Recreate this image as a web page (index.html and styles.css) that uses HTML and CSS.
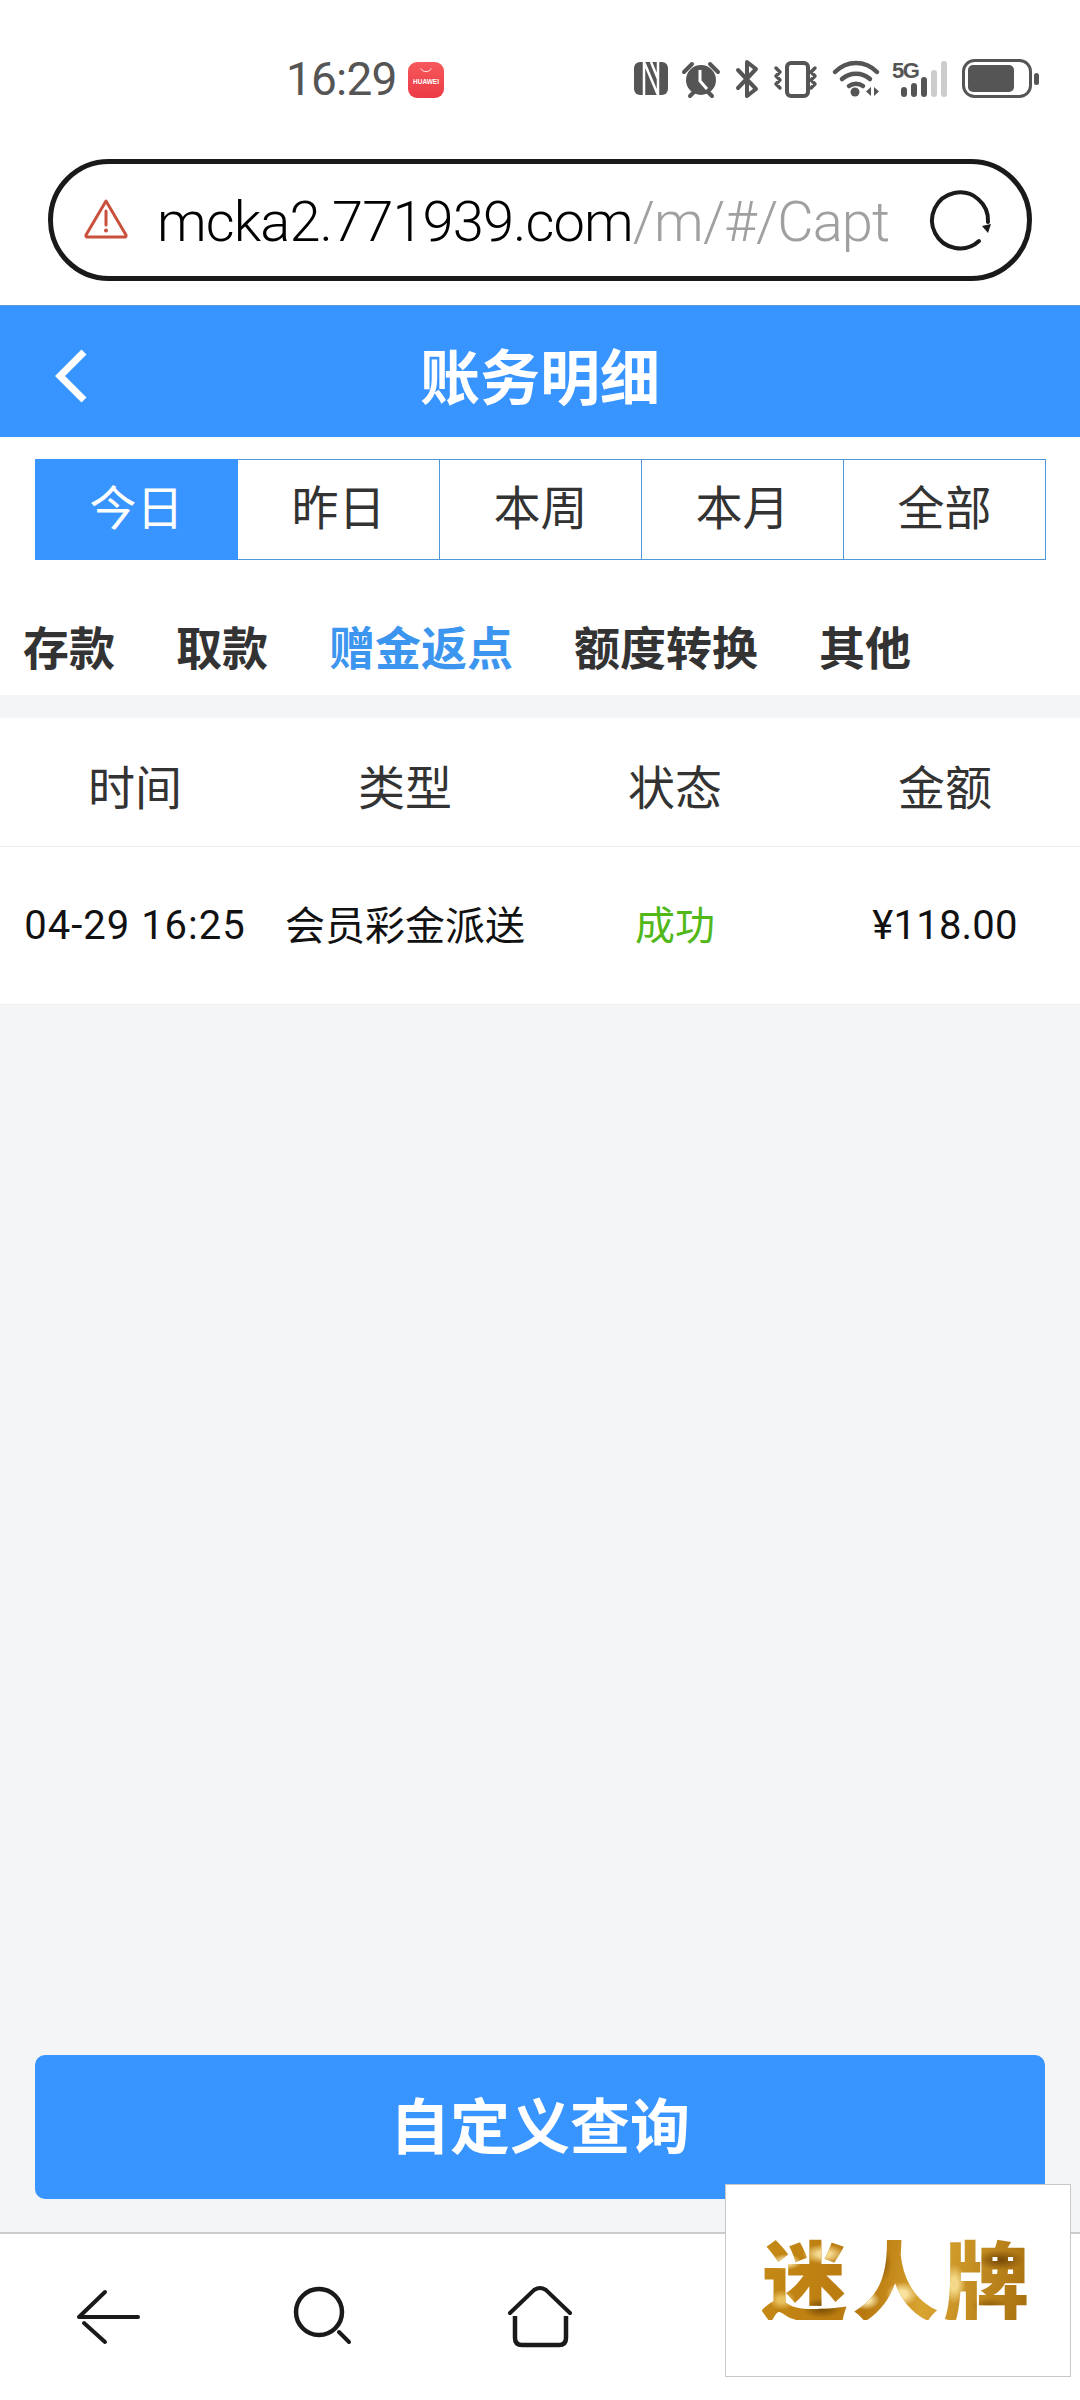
FILE: index.html
```html
<!DOCTYPE html>
<html lang="zh-CN">
<head>
<meta charset="utf-8">
<title>账务明细</title>
<link rel="stylesheet" href="styles.css">
</head>
<body>
<div class="page">
  <div class="status">
    <span class="time">16:29</span>
    <div class="app-badge">
      <svg class="app-smile" viewBox="0 0 16 8"><path d="M2 1.500C4 6.500 12 6.500 14 1.500" fill="none" stroke="#fff" stroke-width="1"/></svg>
      <span class="app-name">HUAWEI</span>
    </div>
    <svg class="status-icons" viewBox="630 56 412 46" width="412" height="46">
      <path d="M640 62h22a6 6 0 0 1 6 6v21a6 6 0 0 1-6 6h-22a6 6 0 0 1-6-6V68a6 6 0 0 1 6-6z" fill="#555"/>
      <path d="M644 62v33M644.500 63L657.500 94M651 62L658 79M658 62v33" fill="none" stroke="#fff" stroke-width="2.500"/>
      <g fill="#555" stroke="#555" stroke-linecap="round">
        <circle cx="701" cy="80" r="15" stroke="none"/>
        <path d="M684 72l8-8M718 72l-8-8M690 96l4-4M712 96l-4-4" stroke-width="4" fill="none"/>
      </g>
      <path d="M700 70v11l7 8" fill="none" stroke="#fff" stroke-width="3"/>
      <path d="M738 70l18 19-9 7V62l9 7-18 19" fill="none" stroke="#555" stroke-width="4" stroke-linejoin="round" stroke-linecap="round"/>
      <rect x="787" y="63" width="21" height="33" rx="4" fill="none" stroke="#555" stroke-width="4"/>
      <path d="M776 68l4 4-4 4 4 4-4 4 4 4M815 68l-4 4 4 4-4 4 4 4-4 4" fill="none" stroke="#555" stroke-width="3.500" stroke-linecap="round" stroke-linejoin="round"/>
      <path d="M835 72c12-12 30-12 42 0M842 79c8-7 20-7 28 0M849 86c4-3 10-3 14 0" fill="none" stroke="#555" stroke-width="4.500" stroke-linecap="round"/>
      <circle cx="855" cy="92" r="4.500" fill="#555"/>
      <path d="M871 87v9l-5-4.500zM874 87v9l5-4.500z" fill="#555"/>
      <text x="892" y="78" class="fiveg">5G</text>
      <g fill="#555">
        <rect x="901" y="87" width="6" height="10" rx="3"/>
        <rect x="911" y="83" width="6" height="14" rx="3"/>
        <rect x="921" y="77" width="6" height="20" rx="3"/>
      </g>
      <g fill="#ccc">
        <rect x="931" y="70" width="6" height="27" rx="3"/>
        <rect x="941" y="61" width="6" height="36" rx="3"/>
      </g>
      <rect x="963.500" y="60.500" width="67" height="36" rx="11" fill="none" stroke="#555" stroke-width="3"/>
      <rect x="968" y="65" width="46" height="27" rx="5" fill="#555"/>
      <rect x="1034" y="73" width="5" height="12" rx="2.500" fill="#555"/>
    </svg>
  </div>

  <div class="url-wrap">
    <div class="url-bar">
      <svg class="warn" viewBox="0 0 46 42" width="46" height="42">
        <path d="M23 3L43 37a1.500 1.500 0 0 1-1 2H4a1.500 1.500 0 0 1-1-2z" fill="none" stroke="#c9503c" stroke-width="3" stroke-linejoin="round"/>
        <path d="M23 13v14" stroke="#c9503c" stroke-width="3" stroke-linecap="round"/>
        <circle cx="23" cy="32.500" r="2" fill="#c9503c"/>
      </svg>
      <div class="url-text"><span class="url-host">mcka2.771939.com</span><span class="url-path">/m/#/Capt</span></div>
      <svg class="reload" viewBox="926 186 68 68" width="68" height="68">
        <path d="M979 241A28 28 0 1 1 988 222" fill="none" stroke="#1a1a1a" stroke-width="4" stroke-linecap="round"/>
        <path d="M982 226l6 7 3-9z" fill="#1a1a1a"/>
      </svg>
    </div>
  </div>

  <header class="title-bar">
    <svg class="back" viewBox="0 0 36 56" width="36" height="56">
      <path d="M31 4L7 28l24 24" fill="none" stroke="#fff" stroke-width="7"/>
    </svg>
    <h1 class="title">账务明细</h1>
  </header>

  <div class="periods">
    <div class="period active">今日</div>
    <div class="period">昨日</div>
    <div class="period">本周</div>
    <div class="period">本月</div>
    <div class="period">全部</div>
  </div>

  <nav class="cats">
    <span class="cat">存款</span>
    <span class="cat">取款</span>
    <span class="cat current">赠金返点</span>
    <span class="cat">额度转换</span>
    <span class="cat">其他</span>
  </nav>

  <div class="table">
    <div class="t-head">
      <span>时间</span><span>类型</span><span>状态</span><span>金额</span>
    </div>
    <div class="t-row">
      <span>04-29 16:25</span><span class="t-cjk">会员彩金派送</span><span class="t-cjk ok">成功</span><span class="t-amount">¥118.00</span>
    </div>
  </div>

  <div class="spacer"></div>
  <div class="query">自定义查询</div>

  <div class="bottom-nav">
    <svg viewBox="74 2285 68 64" width="68" height="64">
      <path d="M138 2317H79l26-25M84 2323l21 19" fill="none" stroke="#1a1a1a" stroke-width="4" stroke-linecap="round" stroke-linejoin="round"/>
    </svg>
    <svg viewBox="292 2285 64 64" width="64" height="64">
      <circle cx="319" cy="2312" r="23" fill="none" stroke="#1a1a1a" stroke-width="4.500"/>
      <path d="M339 2332l10 10" fill="none" stroke="#1a1a1a" stroke-width="4" stroke-linecap="round"/>
    </svg>
    <svg viewBox="506 2285 68 64" width="68" height="64">
      <path d="M510 2313l24-23q6-4 12 0l24 23" fill="none" stroke="#1a1a1a" stroke-width="4" stroke-linecap="round"/>
      <path d="M515 2316v22q0 7 7 7h37q7 0 7-7v-22" fill="none" stroke="#1a1a1a" stroke-width="4.500"/>
    </svg>
  </div>

  <div class="float-logo"><span class="gold">迷人牌</span></div>
</div>
</body>
</html>
```
FILE: styles.css
```css
* { box-sizing: border-box; }
html, body { margin: 0; padding: 0; background: #fff; }
body { font-family: Roboto, "Noto Sans CJK SC", sans-serif; color: #333; }
.page {
  position: relative;
  width: 1080px;
  height: 2400px;
  display: flex;
  flex-direction: column;
  background: #f4f5f7;
  overflow: hidden;
}
.status {
  height: 159px;
  background: #fff;
  display: flex;
  align-items: flex-start;
  padding: 56px 0 0 286px;
  flex: none;
}
.time {
  font-size: 46px;
  line-height: 46px;
  width: 122px;
  letter-spacing: -0.8px;
  color: #555;
}
.app-badge {
  width: 36px;
  height: 36px;
  margin-top: 6px;
  border-radius: 9px;
  background: linear-gradient(#f6595c, #ec3b46);
  display: flex;
  flex-direction: column;
  align-items: center;
}
.app-smile { width: 14px; height: 7px; margin-top: 5px; }
.app-name {
  font-family: "Liberation Sans", sans-serif;
  font-size: 6.5px;
  line-height: 8px;
  margin-top: 4px;
  color: #fff;
  font-weight: 700;
}
.status-icons { margin-left: 186px; flex: none; }
.fiveg {
  font-family: "Liberation Sans", sans-serif;
  font-size: 22px;
  font-weight: 700;
  fill: #555;
  letter-spacing: -1.5px;
}
.url-wrap {
  flex: none;
  background: #fff;
  padding: 0 48px 24px;
}
.url-bar {
  height: 122px;
  border: 5px solid #1a1a1a;
  border-radius: 61px;
  background: #fff;
  display: flex;
  align-items: center;
  padding-left: 30px;
}
.warn { flex: none; margin-top: -3px; }
.url-text {
  width: 728px;
  margin-left: 28px;
  padding-top: 3px;
  white-space: nowrap;
  font-size: 56px;
  font-weight: 300;
  line-height: 70px;
  letter-spacing: -0.9px;
  flex: none;
}
.url-host { color: #000; }
.url-path { color: #a0a0a0; }
.reload { flex: none; margin-left: 41px; }
.title-bar {
  flex: none;
  height: 132px;
  background: #3894ff;
  border-top: 1px solid #5d9bd8;
  display: flex;
  align-items: center;
  justify-content: center;
  position: relative;
  padding-top: 4px;
}
.back { position: absolute; left: 53px; top: 42px; }
.title {
  margin: 0;
  font-family: "Noto Sans CJK SC", sans-serif;
  font-size: 60px;
  font-weight: 700;
  color: #fff;
  line-height: 1;
}
.periods {
  flex: none;
  background: #fff;
  padding: 22px 34px 0 36px;
  display: grid;
  grid-template-columns: repeat(5, 1fr);
}
.period {
  height: 101px;
  display: flex;
  align-items: center;
  justify-content: center;
  font-family: "Noto Sans CJK SC", sans-serif;
  font-size: 47px;
  color: #333;
  border: solid #4f97d8;
  border-width: 1px 1px 1px 0;
  padding-bottom: 10px;
}
.period.active {
  background: #3894ff;
  color: #fff;
  border-color: #3894ff;
  box-shadow: -1px 0 0 #3894ff;
}
.cats {
  flex: none;
  height: 135px;
  background: #fff;
  display: flex;
  gap: 61px;
  align-items: center;
  padding: 35px 0 0 23px;
  font-family: "Noto Sans CJK SC", sans-serif;
  font-size: 46px;
  font-weight: 700;
  color: #333;
  line-height: 1;
}
.cat.current { color: #3c96f0; }
.table {
  flex: none;
  margin-top: 23px;
  background: #fff;
  border-bottom: 1px solid #eee;
}
.t-head, .t-row {
  display: grid;
  grid-template-columns: repeat(4, 270px);
  text-align: center;
  align-items: center;
}
.t-head {
  height: 129px;
  border-bottom: 1px solid #eee;
  font-family: "Noto Sans CJK SC", sans-serif;
  font-size: 47px;
  color: #333;
  padding-top: 4px;
}
.t-row {
  height: 157px;
  font-size: 40px;
  color: #111;
  letter-spacing: 1px;
}
.t-cjk {
  font-family: "Noto Sans CJK SC", sans-serif;
  letter-spacing: 0;
  padding-bottom: 6px;
}
.t-amount { letter-spacing: 0.2px; }
.t-row .ok { color: #52b81a; }
.spacer { flex: 1; }
.query {
  flex: none;
  margin: 0 35px 33px;
  height: 144px;
  border-radius: 10px;
  background: #3894ff;
  display: flex;
  align-items: center;
  justify-content: center;
  font-family: "Noto Sans CJK SC", sans-serif;
  font-size: 60px;
  font-weight: 700;
  color: #fff;
  padding-bottom: 10px;
}
.bottom-nav {
  flex: none;
  height: 168px;
  background: #fff;
  border-top: 2px solid #ccc;
  display: flex;
  gap: 150px;
  align-items: flex-start;
  padding: 51px 0 0 74px;
}
.float-logo {
  position: absolute;
  left: 725px;
  top: 2184px;
  width: 346px;
  height: 193px;
  background: #fff;
  border: 1px solid #c8c8c8;
  display: flex;
  align-items: center;
  justify-content: center;
  padding-bottom: 8px;
}
.gold {
  font-family: "Noto Sans CJK SC", sans-serif;
  font-weight: 900;
  font-size: 86px;
  letter-spacing: 5px;
  line-height: 1;
  color: transparent;
  background:
    radial-gradient(ellipse 16px 8px at 24px 28px, #f7e2a2 30%, transparent 100%),
    radial-gradient(ellipse 22px 10px at 62px 20px, #f4d98e 30%, transparent 100%),
    radial-gradient(ellipse 12px 18px at 118px 30px, #8a5a10 10%, transparent 100%),
    radial-gradient(ellipse 16px 12px at 140px 60px, #f8e2a0 30%, transparent 100%),
    radial-gradient(ellipse 14px 10px at 104px 66px, #fbe8ae 30%, transparent 100%),
    radial-gradient(ellipse 24px 10px at 238px 26px, #7a4c08 10%, transparent 100%),
    radial-gradient(ellipse 20px 10px at 60px 74px, #7f5208 20%, transparent 100%),
    radial-gradient(ellipse 12px 20px at 192px 50px, #f5d98a 30%, transparent 100%),
    radial-gradient(ellipse 18px 8px at 228px 72px, #96620c 20%, transparent 100%),
    radial-gradient(ellipse 14px 10px at 20px 66px, #e7bf5c 30%, transparent 100%),
    linear-gradient(100deg, #c58a16, #b8780e 40%, #d9a531 60%, #a46a0c);
  -webkit-background-clip: text;
  background-clip: text;
}
```
